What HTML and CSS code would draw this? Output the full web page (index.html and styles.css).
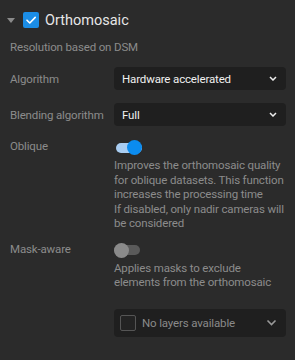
FILE: index.html
```html
<!DOCTYPE html>
<html lang="en">
<head>
    <meta charset="UTF-8">
    <meta name="viewport" content="width=device-width, initial-scale=1.0">
    <title>Orthomosaic</title>
    <link rel="stylesheet" href="styles.css">
</head>
<body>
    <div class="panel">
        <div class="header">
            <span class="caret"></span>
            <span class="check on">
                <svg width="16" height="16" viewBox="0 0 16 16"><path d="M4 8.2 L6.8 11 L12.2 5.4" fill="none" stroke="#fff" stroke-width="1.6" stroke-linecap="round" stroke-linejoin="round"/></svg>
            </span>
            <span class="title">Orthomosaic</span>
        </div>
        <div class="subtitle">Resolution based on DSM</div>

        <div class="row row-select">
            <div class="label">Algorithm</div>
            <div class="select">
                <span class="value">Hardware accelerated</span>
                <svg class="chev" width="8" height="5" viewBox="0 0 8 5"><path d="M1 1 L4 4 L7 1" fill="none" stroke="#eee" stroke-width="1.5"/></svg>
            </div>
        </div>

        <div class="row row-select">
            <div class="label">Blending algorithm</div>
            <div class="select">
                <span class="value">Full</span>
                <svg class="chev" width="8" height="5" viewBox="0 0 8 5"><path d="M1 1 L4 4 L7 1" fill="none" stroke="#eee" stroke-width="1.5"/></svg>
            </div>
        </div>

        <div class="row row-toggle">
            <div class="label">Oblique</div>
            <div class="control">
                <div class="toggle on"><span class="track"></span><span class="knob"></span></div>
                <p class="desc">Improves the orthomosaic quality<br>for oblique datasets. This function<br>increases the processing time<br>If disabled, only nadir cameras will<br>be considered</p>
            </div>
        </div>

        <div class="row row-toggle mask">
            <div class="label">Mask-aware</div>
            <div class="control">
                <div class="toggle"><span class="track"></span><span class="knob"></span></div>
                <p class="desc">Applies masks to exclude<br>elements from the orthomosaic</p>
            </div>
        </div>

        <div class="row layers">
            <div class="label"></div>
            <div class="select big">
                <span class="check empty"></span>
                <span class="value muted">No layers available</span>
                <svg class="chev" width="11" height="7" viewBox="0 0 11 7"><path d="M1.5 1.5 L5.5 5.5 L9.5 1.5" fill="none" stroke="#999" stroke-width="1.6"/></svg>
            </div>
        </div>
    </div>
</body>
</html>
```

FILE: styles.css
```css
html, body {
    margin: 0;
    padding: 0;
    background-color: #2b2b2b;
}

body {
    font-family: Roboto, "Noto Sans", sans-serif;
    color: #8c8c8c;
    font-size: 11.5px;
    letter-spacing: -0.15px;
}

.panel {
    width: 295px;
    height: 360px;
    padding: 12px 9px 0 10px;
    box-sizing: border-box;
}

.header {
    display: flex;
    align-items: center;
    height: 16px;
    margin-left: -3px;
}

.caret {
    width: 0;
    height: 0;
    border-left: 4.5px solid transparent;
    border-right: 4.5px solid transparent;
    border-top: 5px solid #8a8a8a;
    margin-right: 8px;
}

.check {
    width: 16px;
    height: 16px;
    border-radius: 2px;
    box-sizing: border-box;
    flex-shrink: 0;
}

.check.on {
    background-color: #1b8de6;
}

.check svg {
    display: block;
}

.title {
    margin-left: 6px;
    font-size: 14.5px;
    letter-spacing: 0;
    color: #e6e6e6;
}

.subtitle {
    margin-top: 12px;
    line-height: 14px;
}

.row {
    display: grid;
    grid-template-columns: 104px 172px;
}

.label {
    line-height: 14px;
}

.row-select {
    align-items: center;
    margin-top: 13px;
}

.row-select:first-of-type {
    margin-top: 14px;
}

.select {
    height: 23px;
    background-color: #1f1f1f;
    border-radius: 4px;
    display: flex;
    align-items: center;
    padding: 0 9px 0 8px;
}

.value {
    flex: 1;
    color: #f0f0f0;
}

.value.muted {
    color: #8a8a8a;
    margin-left: 6px;
}

.chev {
    display: block;
}

.row-toggle {
    margin-top: 13px;
}

.row-toggle.mask {
    margin-top: 11px;
}

.toggle {
    position: relative;
    width: 28px;
    height: 15px;
    margin-top: 1px;
}

.track {
    position: absolute;
    left: 0;
    top: 2.5px;
    width: 26px;
    height: 10px;
    border-radius: 5px;
    background-color: #5a5a5a;
}

.knob {
    position: absolute;
    left: 0;
    top: 0;
    width: 15px;
    height: 15px;
    border-radius: 50%;
    background-color: #8a8a8a;
}

.toggle.on .track {
    left: 2px;
    background-color: #a9cdf2;
}

.toggle.on .knob {
    left: 13px;
    background-color: #0b8cf0;
}

.desc {
    margin: 3px 0 0;
    line-height: 14.5px;
    white-space: nowrap;
    color: #8c8c8c;
}

.layers {
    margin-top: 19px;
}

.select.big {
    height: 28px;
    padding: 0 9px 0 6px;
}

.check.empty {
    border: 1px solid #555;
    background-color: #232323;
}
```
